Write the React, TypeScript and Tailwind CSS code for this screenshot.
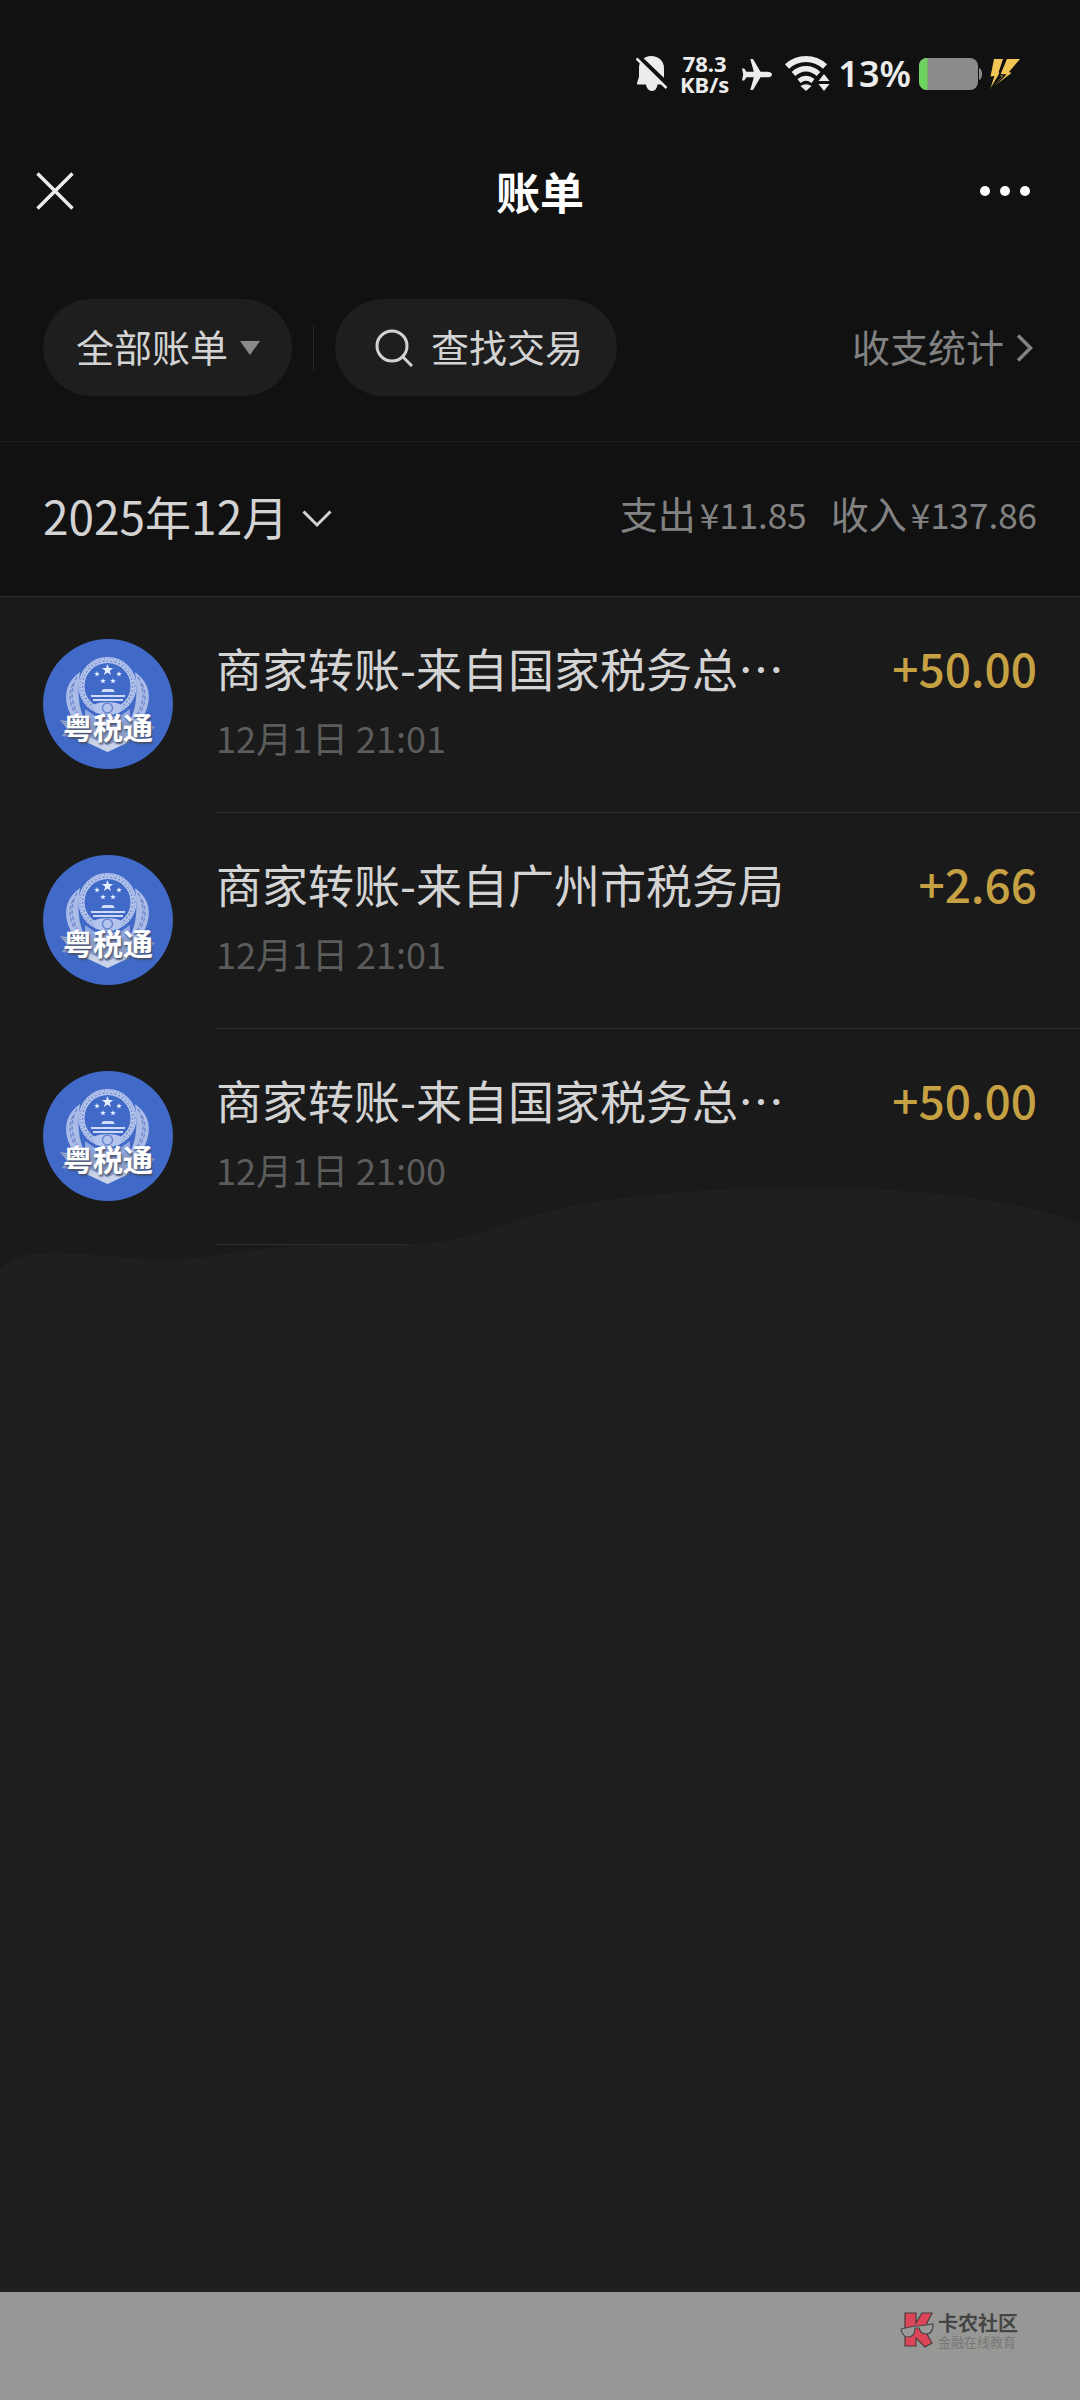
// Bill list page (dark theme)

import React from 'react';

interface Bill {
  id: number;
  title: string;
  time: string;
  amount: string;
}

const BILLS: Bill[] = [
  { id: 1, title: '商家转账-来自国家税务总⋯', time: '12月1日 21:01', amount: '+50.00' },
  { id: 2, title: '商家转账-来自广州市税务局', time: '12月1日 21:01', amount: '+2.66' },
  { id: 3, title: '商家转账-来自国家税务总⋯', time: '12月1日 21:00', amount: '+50.00' },
];

const STAR = 'M0 -6 L1.4 -1.9 L5.7 -1.9 L2.3 0.7 L3.5 4.9 L0 2.4 L-3.5 4.9 L-2.3 0.7 L-5.7 -1.9 L-1.4 -1.9 Z';

const StatusBar: React.FC = () => (
  <div className="flex h-[148px] items-center justify-end pr-[60px] text-[#ececec]">
    <svg width="32" height="36" viewBox="0 0 32 36" fill="currentColor">
      <path d="M15 0 C8 0 3 5 3 12 V20 C3 23 1 25 1 28.500 H10 C10.500 32 12.500 35 16 35 S21 32 21.500 28.500 H28 V12 C28 5 23 0 15 0 Z" />
      <path d="M2 1 L32 30" stroke="#111" strokeWidth="6" />
      <path d="M0.500 2.500 L30.500 32" stroke="currentColor" strokeWidth="2.500" />
    </svg>
    <div className="ml-3 text-center font-['Noto_Sans',sans-serif] text-[22px] leading-[21px] font-bold">
      <div>78.3</div>
      <div>KB/s</div>
    </div>
    <svg className="ml-3" width="32" height="32" viewBox="0 0 32 32" fill="currentColor">
      <path d="M31 16.500 C31 14.500 28.500 13.700 26.500 13.700 H19.500 L12 1 H9.300 L12.800 13.700 H5.500 L3.200 10.500 H1 L2.200 16.500 L1 22.500 H3.200 L5.500 19.300 H12.800 L9.300 32 H12 L19.500 19.300 H26.500 C28.500 19.300 31 18.500 31 16.500 Z" />
    </svg>
    <svg className="ml-3" width="45" height="36" viewBox="0 0 45 36" fill="none" stroke="currentColor">
      <path d="M2 10.500 C13 0.500 29 0.500 40 10.500" strokeWidth="6" />
      <path d="M8.500 18 C16 11 26 11 33.500 18" strokeWidth="5.500" />
      <path d="M14 25 C18.500 21.500 23.500 21.500 28 25" strokeWidth="5" />
      <path d="M21 35 L15.500 30 Q21 26.500 26.500 30 Z" fill="currentColor" stroke="none" />
      <path d="M39 18 L44.500 25 H33.500 Z M39 35 L44.500 28 H33.500 Z" fill="currentColor" stroke="none" />
    </svg>
    <span className="ml-2 font-['Noto_Sans',sans-serif] text-[36px] leading-[44px] font-semibold">13%</span>
    <svg className="ml-2" width="63" height="32" viewBox="0 0 63 32">
      <rect x="0" y="0" width="59" height="32" rx="8" fill="#8b8b8b" />
      <path d="M8 0 H8.500 V32 H8 A8 8 0 0 1 0 24 V8 A8 8 0 0 1 8 0 Z" fill="#6ed25f" />
      <path d="M60 10 Q63 11 63 16 T60 22 Z" fill="#8b8b8b" />
    </svg>
    <svg className="ml-2" width="30" height="30" viewBox="0 0 30 30" fill="#f2c654">
      <path d="M4 0 H13 L8.500 13.500 H10 L0.500 29 L4.500 17 L0.500 17.500 Z" />
      <path d="M17 0 H30 L19 13 L21.500 14 L0.500 30 L12 17.500 L10 16.500 Z" />
      <path d="M15 0 L9.500 15.500 L15 16 L2 29" stroke="#111" strokeWidth="1.500" fill="none" />
    </svg>
  </div>
);

const NavBar: React.FC = () => (
  <header className="flex h-[86px] items-center justify-between px-9">
    <button aria-label="关闭" className="w-[56px]">
      <svg width="38" height="38" viewBox="0 0 38 38" stroke="#ececec" strokeWidth="3.500">
        <path d="M1.500 1.500 L36.500 36.500 M36.500 1.500 L1.500 36.500" />
      </svg>
    </button>
    <h1 className="text-[44px] leading-[60px] font-bold text-white">账单</h1>
    <button aria-label="更多" className="flex w-[56px] justify-end pr-[14px]">
      <svg width="50" height="10" viewBox="0 0 50 10" fill="#fff" className="shrink-0">
        <circle cx="5" cy="5" r="5" />
        <circle cx="25" cy="5" r="5" />
        <circle cx="45" cy="5" r="5" />
      </svg>
    </button>
  </header>
);

const FilterBar: React.FC = () => (
  <div className="flex items-center border-b border-[#1e1e1e] px-[43px] pt-[65px] pb-[45px] text-[38px] leading-[56px] text-[#d3d3d3]">
    <button className="flex h-[97px] items-center gap-3 rounded-full bg-[#1e1e1e] pr-8 pl-[33px]">
      <span className="pb-1">全部账单</span>
      <svg width="20" height="14" viewBox="0 0 20 14" fill="#8a8a8a">
        <path d="M0 0 H20 L10 14 Z" />
      </svg>
    </button>
    <div className="mx-[21px] h-11 w-px bg-[#2a2a2a]" />
    <button className="flex h-[97px] items-center gap-[18px] rounded-full bg-[#1e1e1e] pr-[34px] pl-10">
      <svg width="38" height="38" viewBox="0 0 38 38" fill="none" stroke="#d3d3d3" strokeWidth="3">
        <circle cx="17" cy="17" r="15" />
        <path d="M28 28 L37 37" />
      </svg>
      <span className="pb-1">查找交易</span>
    </button>
    <a href="#stats" className="ml-auto flex items-center gap-3 pr-1 text-[#828282]">
      <span className="pb-1">收支统计</span>
      <svg width="17" height="28" viewBox="0 0 17 28" fill="none" stroke="currentColor" strokeWidth="3.500">
        <path d="M2 1.500 L14.500 14 L2 26.500" />
      </svg>
    </a>
  </div>
);

const MonthSummary: React.FC = () => (
  <div className="flex h-[155px] items-center justify-between border-b border-[#303030] px-[43px]">
    <button className="flex items-center gap-[14px] text-[46px] leading-[64px] text-[#d3d3d3]">
      <span className="pb-2">2025年12月</span>
      <svg width="30" height="18" viewBox="0 0 30 18" fill="none" stroke="currentColor" strokeWidth="3">
        <path d="M1.500 1.500 L15 15 L28.500 1.500" />
      </svg>
    </button>
    <div className="flex gap-6 pb-3 text-[38px] leading-[56px] text-[#828282]">
      <span className="flex items-baseline gap-1">
        支出<span className="text-[35px]">¥11.85</span>
      </span>
      <span className="flex items-baseline gap-1">
        收入<span className="text-[35px]">¥137.86</span>
      </span>
    </div>
  </div>
);

const MerchantAvatar: React.FC = () => (
  <div className="relative h-[130px] w-[130px] shrink-0 overflow-hidden rounded-full bg-[#4169c8]">
    <svg width="130" height="130" viewBox="0 0 130 130" fill="none">
      {/* wheat wings */}
      <path d="M37 33 C21 44 19 62 30 80 L46 88 C38 76 33 62 37 33 Z" fill="#a9bbe6" />
      <path d="M92 33 C108 44 110 62 99 80 L83 88 C91 76 96 62 92 33 Z" fill="#a9bbe6" />
      <path d="M34 38 C26 52 28 66 38 80 M30 45 C24 56 28 70 34 76" stroke="#6a86cc" strokeWidth="1.200" strokeDasharray="4 2" />
      <path d="M95 38 C103 52 101 66 91 80 M99 45 C105 56 101 70 95 76" stroke="#6a86cc" strokeWidth="1.200" strokeDasharray="4 2" />
      {/* ring */}
      <circle cx="64.500" cy="47" r="26" stroke="#b4c4ec" strokeWidth="6" />
      <circle cx="64.500" cy="47" r="27.500" stroke="#6a86cc" strokeWidth="1.200" strokeDasharray="1 2" />
      <circle cx="64.500" cy="47" r="25" stroke="#6a86cc" strokeWidth="1.200" strokeDasharray="2 2" />
      <path d={STAR} transform="translate(64.500 31)" fill="#e4ecff" />
      <path d={STAR} transform="translate(54 35) scale(0.500)" fill="#e4ecff" />
      <path d={STAR} transform="translate(76 35) scale(0.500)" fill="#e4ecff" />
      <path d={STAR} transform="translate(60 42) scale(0.500)" fill="#e4ecff" />
      <path d={STAR} transform="translate(70 42) scale(0.500)" fill="#e4ecff" />
      {/* gate */}
      <path d="M60 50 H70 L72 53 H58 Z M48 56 H82 V58 H48 Z M50 60 H80 V62 H50 Z" fill="#cfdaf6" />
      <path d="M50 66 C58 62 71 62 79 66 L76 74 H53 Z" fill="#b4c4ec" />
      <circle cx="64.500" cy="69" r="5" stroke="#6a86cc" strokeWidth="1.500" />
      <path d="M42 70 L52 77 H77 L87 70 V84 H42 Z" fill="#8fa6dd" />
      {/* ribbon */}
      <path d="M17 81 L34 83 L95 83 L112 88 L106 93 L109 97 L92 99 L64.500 113 L38 99 L19 97 L24 90 Z" fill="#8f9fc6" />
      <path d="M40 96 L64.500 106 L90 96 L86 103 L64.500 113 L43 103 Z" fill="#c9d3ea" />
    </svg>
    <span className="absolute inset-x-0 top-[67px] text-center text-[30px] leading-[40px] font-bold text-white [text-shadow:1px_2px_2px_#44516f]">
      粤税通
    </span>
  </div>
);

const BillRow: React.FC<{ bill: Bill }> = ({ bill }) => (
  <li className="flex h-[216px] gap-[43px] pl-[43px]">
    <div className="pt-[42px]">
      <MerchantAvatar />
    </div>
    <div className="flex flex-1 items-start justify-between border-b border-[#303030] pt-9 pr-[43px]">
      <div>
        <div className="text-[46px] leading-[68px] text-[#d3d3d3]">{bill.title}</div>
        <div className="text-[36px] leading-[72px] text-[#5c5c5c]">{bill.time}</div>
      </div>
      <div className="text-[46px] leading-[68px] font-medium text-[#c6a144]">{bill.amount}</div>
    </div>
  </li>
);

const FooterBar: React.FC = () => (
  <footer className="flex h-[108px] items-start justify-end gap-1 bg-[#979795] pt-[20px] pr-[62px]">
    <svg width="34" height="36" viewBox="0 0 34 36">
      <path d="M5 1 H16 V11 L22 1 H32 L24 17 L32 31 L25 35 L16 26 V34 H5 Z" fill="#dc4658" stroke="#4a3b3d" strokeWidth="1.200" />
      <path d="M1 17 L15 14 L19 14 L33 12 C33 20 30 22 26 22 C22 22 20 20 19 16 H15 C15 23 12 25 8 25 C4 25 2 22 1 17 Z" fill="#9b9b99" stroke="#4a4a4a" strokeWidth="1.200" />
    </svg>
    <div>
      <div className="text-[20px] leading-[22px] font-bold text-[#454545]">卡农社区</div>
      <div className="text-[13px] leading-[15px] text-[#787876]">金融在线教育</div>
    </div>
  </footer>
);

const App: React.FC = () => {
  return (
    <div className="flex min-h-screen flex-col bg-[#111] font-['Noto_Sans_CJK_SC',sans-serif]">
      <StatusBar />
      <NavBar />
      <FilterBar />
      <MonthSummary />
      <ul className="bg-[#1a1a1a]">
        {BILLS.map((bill) => (
          <BillRow key={bill.id} bill={bill} />
        ))}
      </ul>
      {/* lighter sheet with a wavy top edge, overlapping the last row */}
      <div className="relative flex-1 bg-[#1f1f1e]">
        <div className="absolute inset-x-0 top-0 h-[32px] bg-[#1a1a1a]" />
        <svg className="absolute inset-x-0 top-[-57px] h-[90px] w-full" viewBox="0 0 1080 91" preserveAspectRatio="none">
          <path
            d="M0 91 V82 C10 72 24 66 44 66 C90 64 130 74 180 72 C230 68 260 60 300 59 C360 56 400 60 440 54 C490 46 530 24 590 15 C660 4 720 0 800 0 C900 -1 1010 8 1080 36 V91 Z"
            fill="#1f1f1e"
          />
        </svg>
      </div>
      <FooterBar />
    </div>
  );
};

export default App;
